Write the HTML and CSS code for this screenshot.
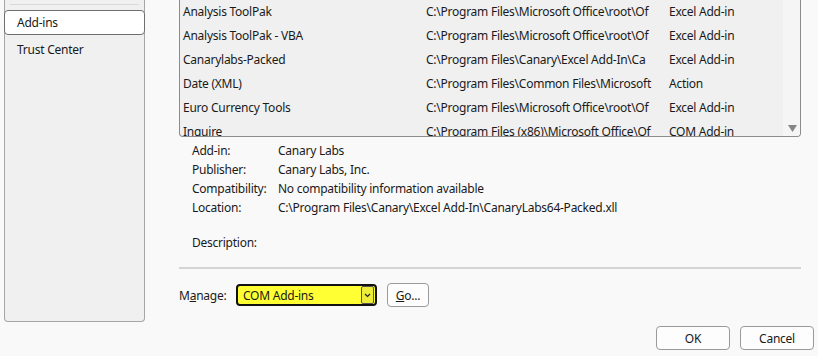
FILE: index.html
```html
<!DOCTYPE html>
<html lang="en">
<head>
    <meta charset="UTF-8">
    <title>Excel Options - Add-ins</title>
    <link rel="stylesheet" href="styles.css">
</head>
<body>
    <div class="dialog">
        <div class="content">
            <div class="nav">
                <div class="nav-sep"></div>
                <div class="nav-item selected">Add-ins</div>
                <div class="nav-item">Trust Center</div>
            </div>
            <div class="main">
                <div class="list">
                    <div class="rows">
                        <div class="row"><span class="c-name">Analysis ToolPak</span><span class="c-loc">C:\Program Files\Microsoft Office\root\Of</span><span class="c-type">Excel Add-in</span></div>
                        <div class="row"><span class="c-name">Analysis ToolPak - VBA</span><span class="c-loc">C:\Program Files\Microsoft Office\root\Of</span><span class="c-type">Excel Add-in</span></div>
                        <div class="row"><span class="c-name">Canarylabs-Packed</span><span class="c-loc">C:\Program Files\Canary\Excel Add-In\Ca</span><span class="c-type">Excel Add-in</span></div>
                        <div class="row"><span class="c-name">Date (XML)</span><span class="c-loc">C:\Program Files\Common Files\Microsoft</span><span class="c-type">Action</span></div>
                        <div class="row"><span class="c-name">Euro Currency Tools</span><span class="c-loc">C:\Program Files\Microsoft Office\root\Of</span><span class="c-type">Excel Add-in</span></div>
                        <div class="row"><span class="c-name">Inquire</span><span class="c-loc">C:\Program Files (x86)\Microsoft Office\Of</span><span class="c-type">COM Add-in</span></div>
                    </div>
                    <div class="scrollbar">
                        <svg class="arrow" width="9" height="7" viewBox="0 0 9 7"><path d="M0 0h9L4.5 7z" fill="#858585"/></svg>
                    </div>
                </div>
                <div class="details">
                    <span class="label">Add-in:</span><span>Canary Labs</span>
                    <span class="label">Publisher:</span><span>Canary Labs, Inc.</span>
                    <span class="label">Compatibility:</span><span>No compatibility information available</span>
                    <span class="label">Location:</span><span>C:\Program Files\Canary\Excel Add-In\CanaryLabs64-Packed.xll</span>
                    <span class="label desc">Description:</span><span class="desc"></span>
                </div>
                <div class="separator"></div>
                <div class="manage">
                    <span class="manage-label">M<u>a</u>nage:</span>
                    <div class="select">
                        <span class="select-value">COM Add-ins</span>
                        <span class="select-btn">
                            <svg width="7" height="5" viewBox="0 0 7 5"><path d="M1 1l2.5 2.5L6 1" fill="none" stroke="#222" stroke-width="1.2"/></svg>
                        </span>
                    </div>
                    <button class="btn go"><u>G</u>o...</button>
                </div>
            </div>
        </div>
        <div class="footer">
            <button class="btn dlg">OK</button>
            <button class="btn dlg">Cancel</button>
        </div>
    </div>
</body>
</html>
```

FILE: styles.css
```css
body {
    margin: 0;
    background-color: #f9f9f9;
    font-family: "Noto Sans", "Open Sans", sans-serif;
    font-size: 12px;
    letter-spacing: -0.25px;
    color: #1a1a1a;
}
.dialog {
    width: 818px;
    height: 356px;
    overflow: hidden;
}
.content {
    display: flex;
    height: 322px;
}
.nav {
    width: 139px;
    margin-left: 4px;
    background-color: #f0f0f0;
    border: 1px solid #a6a6a6;
    border-top: none;
    border-radius: 0 0 4px 4px;
}
.nav-sep {
    height: 1px;
    margin: 4px 5px 5px 5px;
    background-color: #d9d9d9;
}
.nav-item {
    height: 25px;
    line-height: 25px;
    padding-left: 13px;
    margin: 0 -1px;
}
.nav-item.selected {
    background-color: #fff;
    border: 1px solid #6f6f6f;
    border-radius: 4px;
    height: 23px;
    line-height: 23px;
    padding-left: 12px;
    margin-bottom: 2px;
}
.main {
    width: 622px;
    margin-left: 34px;
}
.list {
    display: flex;
    height: 136px;
    background-color: #f0f0f0;
    border: 1px solid #8c8c8c;
    border-top: none;
    border-radius: 0 0 4px 4px;
    overflow: hidden;
}
.rows {
    flex: 1;
    overflow: hidden;
}
.row {
    display: flex;
    height: 24px;
    line-height: 24px;
    white-space: nowrap;
}
.c-name {
    width: 243px;
    padding-left: 3px;
}
.c-loc {
    width: 243px;
}
.c-type {
    flex: 1;
}
.scrollbar {
    width: 17px;
    background-color: #f5f5f5;
    display: flex;
    flex-direction: column;
    justify-content: flex-end;
    align-items: center;
}
.scrollbar .arrow {
    margin-bottom: 4px;
    margin-left: 1px;
}
.details {
    display: grid;
    grid-template-columns: 86px 1fr;
    grid-auto-rows: 19px;
    line-height: 19px;
    margin: 4px 0 0 13px;
    height: 126px;
}
.details .desc {
    margin-top: 16px;
}
.separator {
    height: 2px;
    background-color: #d4d4d4;
}
.manage {
    display: flex;
    align-items: center;
    margin-top: 14px;
}
.manage-label {
    width: 57px;
}
.select {
    display: flex;
    align-items: center;
    width: 137px;
    height: 18px;
    border: 2px solid #111;
    border-radius: 4px;
    background-color: #ffff33;
}
.select-value {
    flex: 1;
    padding-left: 5px;
}
.select-btn {
    display: flex;
    align-items: center;
    justify-content: center;
    width: 11px;
    height: 16px;
    margin-right: 1px;
    border: 1px solid #555;
    border-radius: 2px;
    background-color: #eded3a;
}
.btn {
    font-family: inherit;
    font-size: 12px;
    letter-spacing: inherit;
    color: #1a1a1a;
    background-color: #fdfdfd;
    border: 1px solid #9a9a9a;
    border-radius: 4px;
    padding: 0;
}
.go {
    width: 42px;
    height: 24px;
    margin-left: 10px;
}
.footer {
    display: flex;
    justify-content: flex-end;
    gap: 10px;
    padding: 4px 4px 0 0;
}
.dlg {
    width: 74px;
    height: 24px;
}
```
